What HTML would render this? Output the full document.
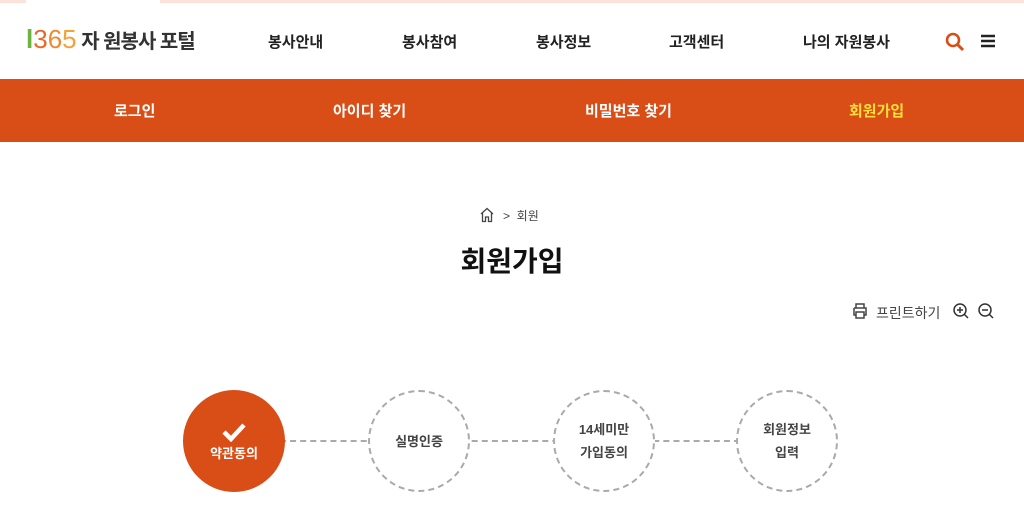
<!DOCTYPE html>
<html><head><meta charset="utf-8"><style>
*{margin:0;padding:0;box-sizing:border-box}
body{width:1024px;height:523px;overflow:hidden;background:#fff;font-family:"Liberation Sans","Noto Sans CJK KR",sans-serif;position:relative}
.topline{position:absolute;top:0;left:0;width:1024px;height:3px;background:#fbe3da}
.topline2{position:absolute;top:0;left:26px;width:134px;height:3px;background:#fff}
.logo{position:absolute;left:26px;top:24px;font-size:26px;line-height:30px;white-space:nowrap}
.nav{position:absolute;top:31px;font-size:15px;font-weight:bold;color:#222}
.bar{position:absolute;top:79px;left:0;width:1024px;height:63px;background:#d94d17}
.bar span{position:absolute;top:21px;font-size:15px;font-weight:bold;color:#fff}
.dash{position:absolute;top:440px;height:0;border-top:2px dashed #aaa}
.c{position:absolute;top:390px;width:102px;height:102px;border-radius:50%;border:2px dashed #aaa;background:#fff;display:flex;align-items:center;justify-content:center;text-align:center;font-size:13px;color:#444;line-height:23px;font-weight:bold}
</style></head><body>
<div class="topline"></div><div class="topline2"></div>
<div class="logo"><span style="color:#6cb33f;font-weight:bold">l</span><span style="color:#e8692a">3</span><span style="color:#f08a2c">6</span><span style="color:#f5a235">5</span><span style="color:#333;font-size:20px;font-weight:bold;letter-spacing:-1px"> 자 원봉사 포털</span></div>
<div class="nav" style="left:268px">봉사안내</div>
<div class="nav" style="left:402px">봉사참여</div>
<div class="nav" style="left:536px">봉사정보</div>
<div class="nav" style="left:669px">고객센터</div>
<div class="nav" style="left:803px">나의 자원봉사</div>
<svg style="position:absolute;left:945px;top:32px" width="20" height="20" viewBox="0 0 20 20"><circle cx="8" cy="8" r="6" fill="none" stroke="#d94d17" stroke-width="2.6"/><path d="M12.5 12.5L18 18" stroke="#d94d17" stroke-width="3"/></svg>
<svg style="position:absolute;left:981px;top:34px" width="14" height="14" viewBox="0 0 14 14"><path d="M0 2H14M0 7H14M0 12H14" stroke="#222" stroke-width="2.4"/></svg>
<div class="bar">
<span style="left:114px">로그인</span><span style="left:333px">아이디 찾기</span><span style="left:585px">비밀번호 찾기</span><span style="left:849px;color:#ffe03a">회원가입</span>
</div>
<svg style="position:absolute;left:479px;top:207px" width="16" height="16" viewBox="0 0 16 16"><path d="M2 7L8 1.5L14 7M3.5 6V14.5H6.5V10H9.5V14.5H12.5V6" fill="none" stroke="#444" stroke-width="1.3"/></svg>
<div style="position:absolute;left:503px;top:207px;font-size:12px;color:#444">&gt;&nbsp;&nbsp;회원</div>
<div style="position:absolute;left:0;width:1024px;top:240px;text-align:center;font-size:28px;font-weight:bold;color:#111">회원가입</div>
<svg style="position:absolute;left:851px;top:302px" width="18" height="18" viewBox="0 0 18 18"><path d="M5 6V2H13V6M3 6H15V13H13M5 13H3V6M5 10H13V16H5Z" fill="none" stroke="#444" stroke-width="1.5"/></svg>
<div style="position:absolute;left:876px;top:303px;font-size:14px;color:#444">프린트하기</div>
<svg style="position:absolute;left:952px;top:302px" width="18" height="18" viewBox="0 0 18 18"><circle cx="8" cy="8" r="6" fill="none" stroke="#333" stroke-width="1.5"/><path d="M12.5 12.5L16 16M5 8H11M8 5V11" stroke="#333" stroke-width="1.5"/></svg>
<svg style="position:absolute;left:977px;top:302px" width="18" height="18" viewBox="0 0 18 18"><circle cx="8" cy="8" r="6" fill="none" stroke="#333" stroke-width="1.5"/><path d="M12.5 12.5L16 16M5 8H11" stroke="#333" stroke-width="1.5"/></svg>
<div class="dash" style="left:280px;width:460px"></div>
<div class="c" style="left:183px;border:none;background:#d94d17;color:#fff;flex-direction:column"><svg width="26" height="20" viewBox="0 0 26 20" style="margin-top:4px"><path d="M3 10L10 17L23 3" fill="none" stroke="#fff" stroke-width="4.5"/></svg><div>약관동의</div></div>
<div class="c" style="left:368px">실명인증</div>
<div class="c" style="left:553px">14세미만<br>가입동의</div>
<div class="c" style="left:736px">회원정보<br>입력</div>
</body></html>
